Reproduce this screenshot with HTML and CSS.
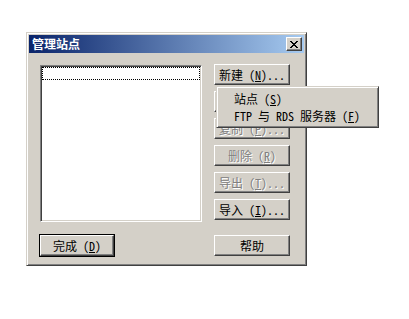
FILE: index.html
```html
<!DOCTYPE html>
<html lang="zh-CN">
<head>
    <meta charset="UTF-8">
    <title>管理站点</title>
    <link rel="stylesheet" href="styles.css">
</head>
<body>
    <div class="dialog">
        <div class="title-bar">
            <span class="title-text">管理站点</span>
            <button class="close-btn">
                <svg width="8" height="7" viewBox="0 0 8 7">
                    <path d="M0 0h2v1h-2zM6 0h2v1h-2zM1 1h2v1h-2zM5 1h2v1h-2zM2 2h4v1h-4zM3 3h2v1h-2zM2 4h4v1h-4zM1 5h2v1h-2zM5 5h2v1h-2zM0 6h2v1h-2zM6 6h2v1h-2z" fill="#000"/>
                </svg>
            </button>
        </div>

        <div class="client">
            <div class="site-list">
                <div class="site-row"></div>
            </div>

            <div class="side-buttons">
                <button class="btn">新建 (<u>N</u>)...</button>
                <!-- covered by the popup menu -->
                <button class="btn btn-covered" disabled></button>
                <button class="btn" disabled>复制 (<u>P</u>)...</button>
                <button class="btn" disabled>删除 (<u>R</u>)</button>
                <button class="btn" disabled>导出 (<u>T</u>)...</button>
                <button class="btn">导入 (<u>I</u>)...</button>
            </div>

            <div class="bottom-left">
                <button class="btn btn-default">完成 (<u>D</u>)</button>
            </div>
            <div class="bottom-right">
                <button class="btn">帮助</button>
            </div>
        </div>
    </div>

    <!-- popup from 新建 -->
    <div class="popup-menu">
        <div class="menu-item">站点 (<u>S</u>)</div>
        <div class="menu-item">FTP 与 RDS 服务器 (<u>F</u>)</div>
    </div>
</body>
</html>
```

FILE: styles.css
```css
:root {
    --face: #d4d0c8;
    --shadow: #808080;
    --dark: #404040;
    --light: #ffffff;
}

body {
    margin: 0;
    background: #ffffff;
    font-family: "Noto Sans Mono CJK SC", "Noto Sans CJK SC", monospace;
    font-size: 12px;
    color: #000;
}

.dialog {
    box-sizing: border-box;
    width: 281px;
    height: 234px;
    margin: 32px 0 0 26px;
    background: var(--face);
    border: 1px solid;
    border-color: var(--face) var(--dark) var(--dark) var(--face);
    box-shadow: inset 1px 1px var(--light), inset -1px -1px var(--shadow);
    padding: 2px;
}

.title-bar {
    height: 18px;
    display: flex;
    align-items: center;
    justify-content: space-between;
    background: linear-gradient(to right, #0a246a, #a6caf0);
    padding: 0 2px 0 3px;
}

.title-text {
    color: #fff;
    font-weight: bold;
    line-height: 18px;
}

.close-btn {
    box-sizing: border-box;
    width: 16px;
    height: 14px;
    padding: 0;
    display: flex;
    align-items: center;
    justify-content: center;
    background: var(--face);
    border: 1px solid;
    border-color: var(--light) var(--dark) var(--dark) var(--light);
    box-shadow: inset -1px -1px var(--shadow);
}

.close-btn svg {
    display: block;
    margin: 0 1px 0 0;
}

.client {
    display: grid;
    grid-template-columns: 162px 76px;
    grid-template-rows: 158px 21px;
    column-gap: 12px;
    row-gap: 13px;
    padding: 11px 0 0 11px;
}

.site-list {
    box-sizing: border-box;
    height: 157px;
    margin-top: 1px;
    background: #fff;
    border: 1px solid;
    border-color: var(--shadow) var(--light) var(--light) var(--shadow);
    box-shadow: inset 1px 1px var(--dark), inset -1px -1px var(--face);
    padding: 1px;
}

.site-row {
    height: 13px;
    border: 1px dotted #000;
    box-sizing: border-box;
}

.side-buttons {
    display: flex;
    flex-direction: column;
    gap: 6px;
}

.btn {
    box-sizing: border-box;
    width: 76px;
    height: 21px;
    padding: 0;
    font: inherit;
    line-height: 19px;
    color: #000;
    background: var(--face);
    border: 1px solid;
    border-color: var(--light) var(--dark) var(--dark) var(--light);
    box-shadow: inset -1px -1px var(--shadow), inset 1px 1px var(--face);
    text-align: center;
}

.btn:disabled {
    color: var(--shadow);
    text-shadow: 1px 1px var(--light);
}

.btn u {
    text-underline-offset: 1px;
}

.bottom-left .btn-default {
    width: 74px;
    outline: 1px solid #000;
    outline-offset: 0;
}

.popup-menu {
    position: absolute;
    left: 216px;
    top: 86px;
    box-sizing: border-box;
    width: 163px;
    height: 42px;
    background: var(--face);
    border: 1px solid;
    border-color: var(--face) var(--dark) var(--dark) var(--face);
    box-shadow: inset 1px 1px var(--light), inset -1px -1px var(--shadow);
    padding: 3px 2px;
}

.menu-item {
    height: 17px;
    line-height: 17px;
    padding-left: 15px;
    white-space: nowrap;
}
```
